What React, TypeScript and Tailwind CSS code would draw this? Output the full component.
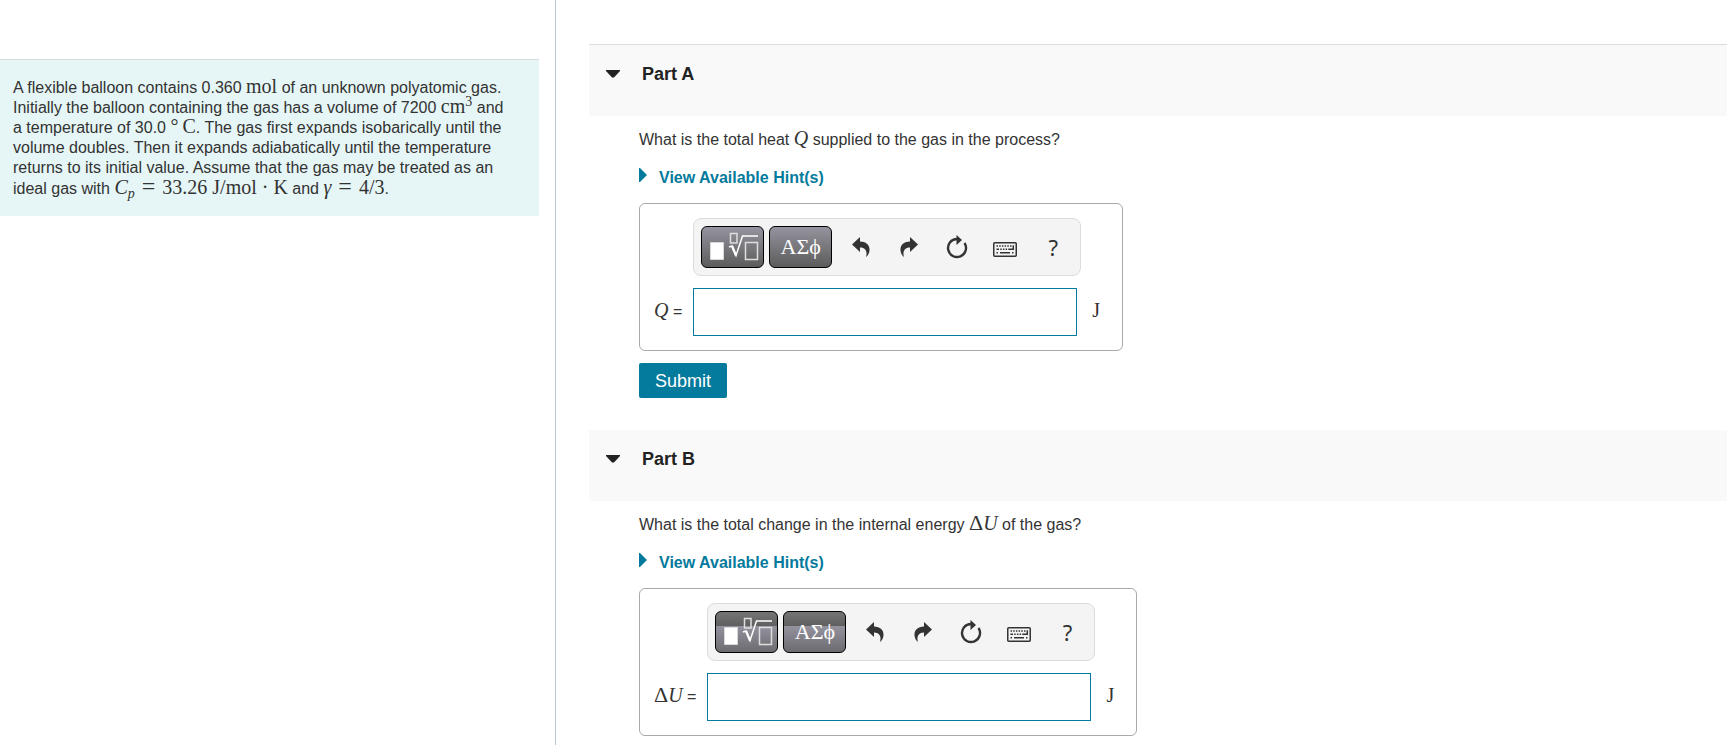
import type { ReactNode } from "react";

const sans = "font-['Liberation_Sans',Arial,sans-serif]";
const serif = "font-['Liberation_Serif','Times_New_Roman',serif]";

export default function App() {
  return (
    <div className={`grid min-h-screen grid-cols-[minmax(0,556fr)_minmax(0,1171fr)] bg-white text-base leading-5 text-[#333] ${sans}`}>
      <aside className="border-r border-[#bdc7d3] pt-[59px] pr-4">
        <Problem />
      </aside>
      <main className="pt-11 pl-[33px]">
        <Part
          id="a"
          title="Part A"
          headerClass="border-t border-[#dcdcdc]"
          question={<>What is the total heat <Math italic>Q</Math> supplied to the gas in the process?</>}
          symbol={<Math italic>Q</Math>}
          toolClass="bg-linear-to-b from-[#96949f] to-[#5c5c5c]"
        >
          <button className="mt-3 h-[35px] rounded-xs bg-[#047a9c] px-4 text-lg leading-5 text-white">Submit</button>
        </Part>
        <Part
          id="b"
          title="Part B"
          headerClass=""
          question={<>What is the total change in the internal energy <Delta /><Math italic>U</Math> of the gas?</>}
          symbol={<><Delta /><Math italic>U</Math></>}
          toolClass="bg-[linear-gradient(to_bottom,#747474_0%,#5f5f5f_35%,#94929e_35%,#6c6b70_100%)]"
        />
      </main>
    </div>
  );
}

function Math({ children, italic = false }: { children: ReactNode; italic?: boolean }) {
  return <span className={`text-xl leading-4 ${serif} ${italic ? "italic" : ""}`}>{children}</span>;
}

function Delta() {
  return <span className={`text-[22px] leading-4 ${serif}`}>Δ</span>;
}

function Equals() {
  return <span className="mx-0.5 text-2xl leading-4">=</span>;
}

function Problem() {
  return (
    <section className="border-t border-[#d8dcdc] bg-[#e6f6f6] pt-[18px] pr-7 pb-[17px] pl-[13px]">
      <p>
        A flexible balloon contains 0.360 <Math>mol</Math> of an unknown polyatomic gas. Initially the balloon containing the gas has a volume of 7200{" "}
        <Math>cm<sup className="text-sm leading-4">3</sup></Math> and a temperature of 30.0 <Math><span className="mr-1">°</span>C</Math>. The gas first expands isobarically until the volume doubles. Then it expands adiabatically until the temperature returns to its initial value. Assume that the gas may be treated as an ideal gas with{" "}
        <span className="whitespace-nowrap">
          <Math><i>C</i><sub className="text-sm leading-3 italic">p</sub> <Equals /> 33.26 J/mol · K</Math>
        </span>{" "}
        and <Math><i>γ</i> <Equals /> 4/3</Math>.
      </p>
    </section>
  );
}

type PartProps = { id: string; title: string; headerClass: string; question: ReactNode; symbol: ReactNode; toolClass: string; children?: ReactNode };

function Part({ id, title, headerClass, question, symbol, toolClass, children }: PartProps) {
  return (
    <section className="mb-8 last:mb-0">
      <header className={`bg-[#f9f9f9] pt-[19px] pb-8 pl-[17px] ${headerClass}`}>
        <button className="flex items-center gap-[22px] text-lg leading-5 font-bold text-[#222]">
          <svg width="14" height="8" viewBox="0 0 14 8" fill="currentColor" aria-hidden="true">
            <path d="M0 0h14v1L8 7.5H6L0 1z" />
          </svg>
          <span>{title}</span>
        </button>
      </header>
      <div className="pt-[14px] pl-[50px]">
        <p>{question}</p>
        <button className="mt-[18px] flex gap-3 leading-5 font-bold text-[#047a9c]">
          <svg width="8" height="14" viewBox="0 0 8 14" fill="currentColor" aria-hidden="true">
            <path d="M0 0h1l7 7-7 7H0z" />
          </svg>
          View Available Hint(s)
        </button>
        <div className="mt-[15px] grid w-fit grid-cols-[auto_auto_auto] items-center gap-x-[11px] gap-y-3 rounded-md border border-[#a9a9a9] py-[14px] pr-[22px] pl-[14px]">
          <Toolbar toolClass={toolClass} />
          <label htmlFor={`answer-${id}`} className="whitespace-nowrap">{symbol} =</label>
          <input id={`answer-${id}`} type="text" className="h-12 w-[384px] border border-[#047a9c] bg-white px-2 outline-none" />
          <span className="ml-1"><Math>J</Math></span>
        </div>
        {children}
      </div>
    </section>
  );
}

function Toolbar({ toolClass }: { toolClass: string }) {
  const tool = `h-[42px] w-[63px] rounded-md border border-black text-white ${toolClass}`;
  const action = "grid h-[42px] w-12 place-items-center";
  return (
    <div className="col-span-2 col-start-2 flex h-[58px] w-[388px] items-center rounded-lg border border-[#dcdcdc] bg-[#f4f4f4] pl-[7px] text-[#333]">
      <button aria-label="Templates" className={tool}>
        <svg width="61" height="40" viewBox="1 1 61 40" fill="none" stroke="white" aria-hidden="true">
          <path d="M9.5 16.5h13v17h-13z" fill="white" stroke="#d8d8d8" />
          <path d="M29.5 7.5h6.5v9.5h-6.5zM44.5 16.5h12v17h-12z" stroke="#dedede" strokeWidth="1.5" />
          <path d="M28 21l3-1 4 9.5L41.5 10H57" strokeWidth="1.5" />
          <path d="M31 20l4 9.5" strokeWidth="2.2" />
        </svg>
      </button>
      <button aria-label="Symbols" className={`ml-[5px] text-[22px] leading-none ${serif} ${tool}`}>ΑΣϕ</button>
      <button aria-label="Undo" className={`ml-[5px] ${action}`}>
        <UndoIcon />
      </button>
      <button aria-label="Redo" className={action}>
        <UndoIcon flip />
      </button>
      <button aria-label="Reset" className={action}>
        <svg width="22" height="24" viewBox="0 0 22 24" fill="none" aria-hidden="true">
          <path d="M11 4a9 9 0 1 0 7.5 4" stroke="currentColor" strokeWidth="2.4" />
          <path d="M10.5 0l5.5 5-5.5 5z" fill="currentColor" />
        </svg>
      </button>
      <button aria-label="Keyboard shortcuts" className={action}>
        <svg width="24" height="20" viewBox="0 0 24 20" fill="none" stroke="currentColor" aria-hidden="true">
          <rect x=".75" y="5.75" width="22.5" height="13.5" rx="1" strokeWidth="1.5" />
          <path d="M3.5 9H19" strokeWidth="1.5" strokeDasharray="1.5 1.2" />
          <path d="M3.5 12.3h2.5m1.2 0h1.5m1.2 0h1.5m1.2 0h1.5m1.2 0H20M20.3 8.2v4.8" strokeWidth="1.5" />
          <path d="M3.5 15.8H5m2 0h10m2 0h1.5" strokeWidth="1.5" />
        </svg>
      </button>
      <button aria-label="Help" className={`font-['Noto_Sans',sans-serif] text-[22px] leading-none ${action}`}>?</button>
    </div>
  );
}

function UndoIcon({ flip = false }: { flip?: boolean }) {
  return (
    <svg width="18" height="20" viewBox="0 0 18 20" fill="currentColor" className={flip ? "-scale-x-100" : ""} aria-hidden="true">
      <path d="M0 7.5L8 0v4.5c6 0 10 3.5 9.5 9-.2 2.5-1.5 5-3.5 6.5C15.5 15 14 10.5 8 10.5V15z" />
    </svg>
  );
}
